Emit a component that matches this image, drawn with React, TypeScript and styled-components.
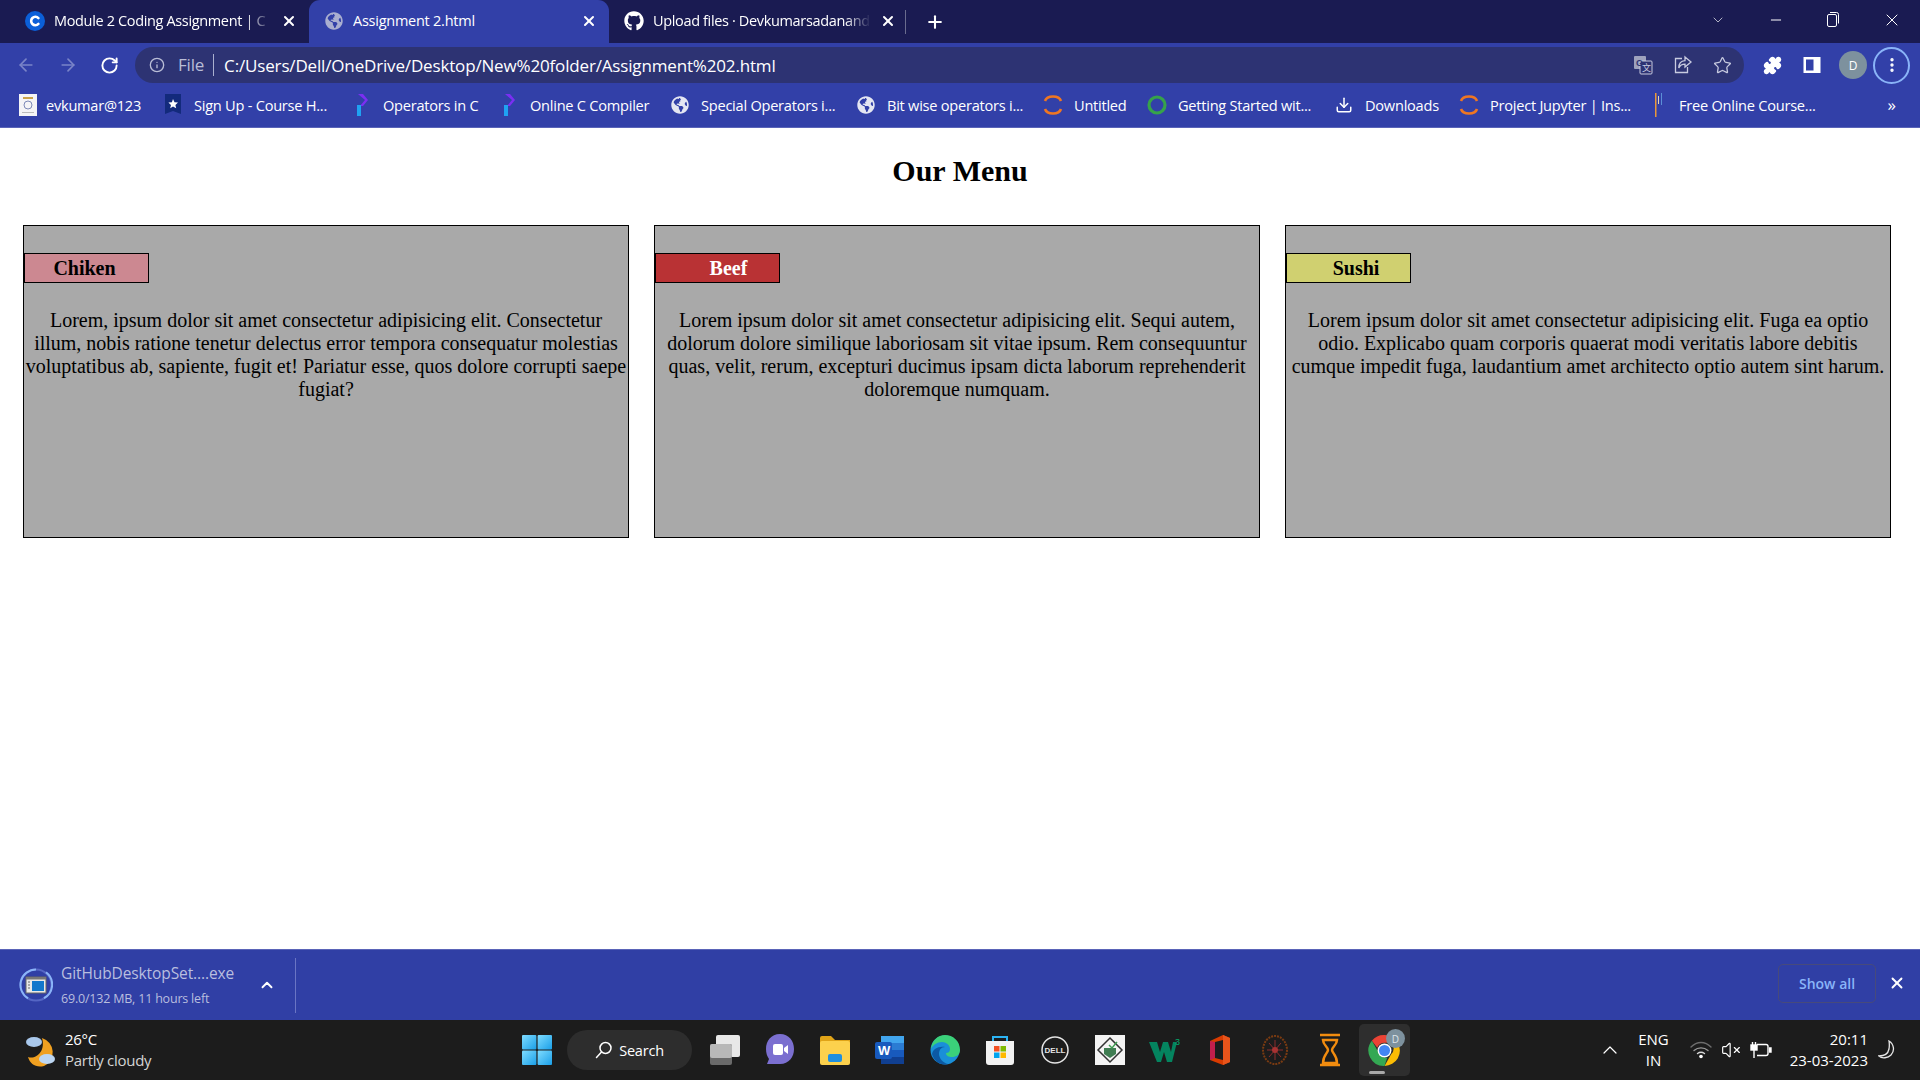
import React from 'react';
import styled, { createGlobalStyle } from 'styled-components';
import {
  ArrowLeft,
  ArrowRight,
  ChevronDown,
  ChevronUp,
  Download,
  Info,
  Minus,
  MoreVertical,
  Plus,
  Puzzle,
  RotateCw,
  Star,
  VolumeX,
  X,
} from 'lucide-react';
import { FaGithub, FaGlobeAmericas } from 'react-icons/fa';

const UI_FONT = '"Open Sans", "Noto Sans", sans-serif';

const GlobalStyle = createGlobalStyle`
  html, body {
    margin: 0;
    padding: 0;
    background: #fff;
    overflow: hidden;
  }
`;

const Screen = styled.div`
  width: 1920px;
  height: 1080px;
  display: flex;
  flex-direction: column;
  overflow: hidden;
  font-family: ${UI_FONT};
`;

/* tab strip */
const TabStrip = styled.div`
  height: 43px;
  flex: none;
  display: flex;
  align-items: stretch;
  background: #1a1b52;
  color: #fff;
`;

const Tab = styled.div<{ $active?: boolean; $width: number; $inset: number }>`
  width: ${(p) => p.$width}px;
  flex: none;
  display: flex;
  align-items: center;
  gap: 9px;
  box-sizing: border-box;
  padding: 0 12px 2px ${(p) => p.$inset}px;
  border-radius: 11px 11px 0 0;
  background: ${(p) => (p.$active ? '#3240a8' : 'transparent')};
`;

const TabTitle = styled.span<{ $fade?: boolean }>`
  flex: 1;
  min-width: 0;
  font-size: 14.5px;
  letter-spacing: ${(p) => (p.$fade ? -0.35 : -0.25)}px;
  white-space: nowrap;
  overflow: hidden;
  ${(p) => p.$fade && 'mask-image: linear-gradient(90deg, #000 88%, transparent 100%);'}
`;

const TabDivider = styled.div`
  width: 1px;
  height: 24px;
  align-self: center;
  background: #6a6c8e;
  margin-left: -3px;
`;

const NewTab = styled.div`
  display: flex;
  align-items: center;
  margin-left: 19px;
`;

const WindowControls = styled.div`
  margin-left: auto;
  display: flex;
  align-items: center;
  gap: 42px;
  padding: 0 18px 3px 0;
`;

const Favicon = styled.span`
  width: 20px;
  height: 20px;
  flex: none;
  display: flex;
  align-items: center;
  justify-content: center;
`;

/* toolbar */
const Toolbar = styled.div`
  height: 41px;
  flex: none;
  display: flex;
  align-items: center;
  background: #3240a8;
  box-sizing: border-box;
  padding: 3px 5px 0 16px;
`;

const NavButtons = styled.div`
  width: 119px;
  flex: none;
  display: flex;
  align-items: center;
  gap: 22px;
`;

const Omnibox = styled.div`
  width: 1609px;
  height: 36px;
  flex: none;
  display: flex;
  align-items: center;
  box-sizing: border-box;
  padding: 0 12px 0 14px;
  border-radius: 18px;
  background: #2d3373;
  color: #fff;
`;

const SchemeLabel = styled.span`
  margin-left: 13px;
  padding-right: 9px;
  border-right: 1px solid #aab0cf;
  color: #b9bdd6;
  font-size: 17px;
  line-height: 22px;
  letter-spacing: -0.2px;
`;

const UrlText = styled.span`
  margin-left: 10px;
  font-size: 17px;
  letter-spacing: -0.16px;
  white-space: nowrap;
`;

const OmniboxActions = styled.div`
  margin-left: auto;
  display: flex;
  align-items: center;
  gap: 20px;
  color: #c8cbe0;
`;

const ToolbarActions = styled.div`
  display: flex;
  align-items: center;
  gap: 21px;
  margin-left: 19px;
  color: #fff;
`;

const Avatar = styled.span`
  width: 28px;
  height: 28px;
  margin-left: -3px;
  display: flex;
  align-items: center;
  justify-content: center;
  border-radius: 50%;
  background: #7d919e;
  color: #fff;
  font-size: 12px;
`;

const MenuRing = styled.span`
  width: 37px;
  height: 37px;
  margin-left: -15px;
  box-sizing: border-box;
  display: flex;
  align-items: center;
  justify-content: center;
  border: 2px solid #8ab4f8;
  border-radius: 50%;
`;

/* bookmarks */
const BookmarkBar = styled.div`
  height: 44px;
  flex: none;
  display: flex;
  align-items: center;
  box-sizing: border-box;
  padding: 0 0 2px 18px;
  background: #3240a8;
  color: #fff;
  border-bottom: 1px solid #5a64b8;
`;

const Bookmark = styled.div<{ $width: number; $gap: number }>`
  width: ${(p) => p.$width}px;
  flex: none;
  display: flex;
  align-items: center;
  gap: ${(p) => p.$gap}px;
  font-size: 14.6px;
  letter-spacing: -0.25px;
  white-space: nowrap;
`;

const BookmarkOverflow = styled.span`
  margin-left: auto;
  padding-right: 24px;
  font-size: 17px;
`;

/* page */
const Page = styled.main`
  flex: 1;
  min-height: 0;
  background: #fff;
  font-family: 'Liberation Serif', 'Times New Roman', serif;
  color: #000;
`;

const Heading = styled.h1`
  margin: 0;
  padding-top: 26px;
  height: 97px;
  box-sizing: border-box;
  text-align: center;
  font-size: 30px;
  line-height: 34px;
  font-weight: 700;
`;

const MenuRow = styled.section`
  display: flex;
  gap: 25px;
  padding-left: 23px;
`;

const MenuCard = styled.article`
  width: 606px;
  height: 313px;
  box-sizing: border-box;
  border: 1px solid #000;
  background: #a9a9a9;
  padding-top: 27px;
`;

const DishLabel = styled.h3<{ $bg: string; $fg: string; $shift: number }>`
  margin: 0;
  width: 125px;
  height: 30px;
  box-sizing: border-box;
  border: 1px solid #000;
  background: ${(p) => p.$bg};
  color: ${(p) => p.$fg};
  font-size: 20px;
  line-height: 28px;
  font-weight: 700;
  text-align: center;
  padding-left: ${(p) => Math.max(p.$shift, 0)}px;
  padding-right: ${(p) => Math.max(-p.$shift, 0)}px;
`;

const DishText = styled.p`
  margin: 26px 0 0;
  text-align: center;
  font-size: 20px;
  line-height: 23px;
`;

/* download shelf */
const DownloadShelf = styled.div`
  height: 71px;
  flex: none;
  display: flex;
  align-items: center;
  box-sizing: border-box;
  background: #303fa5;
  border-top: 1px solid #5a64b8;
  padding: 0 14px 0 19px;
  color: #fff;
`;

const DownloadItem = styled.div`
  width: 277px;
  height: 55px;
  flex: none;
  display: flex;
  align-items: center;
  box-sizing: border-box;
  border-right: 1px solid #6a75c4;
`;

const DownloadInfo = styled.div`
  margin-left: 8px;
  width: 197px;
  display: flex;
  flex-direction: column;
  gap: 8px;
  color: #b9bedf;
`;

const FileName = styled.span`
  font-size: 15.5px;
  line-height: 20px;
  letter-spacing: -0.1px;
`;

const FileProgress = styled.span`
  font-size: 12.5px;
  line-height: 16px;
  letter-spacing: -0.2px;
`;

const ShowAll = styled.div`
  margin: 0 0 4px auto;
  width: 98px;
  height: 39px;
  box-sizing: border-box;
  display: flex;
  align-items: center;
  justify-content: center;
  border: 1px solid #474a7c;
  border-radius: 5px;
  color: #8ab4f8;
  font-size: 14px;
  font-weight: 600;
`;

const ShelfClose = styled.span`
  display: flex;
  margin: 0 0 4px 12px;
`;

/* taskbar */
const Taskbar = styled.footer`
  height: 60px;
  flex: none;
  display: grid;
  grid-template-columns: 522px 1fr auto;
  align-items: center;
  background: #1c1c1c;
  color: #fff;
`;

const Weather = styled.div`
  display: flex;
  align-items: center;
  gap: 7px;
  padding-left: 24px;
`;

const TrayLines = styled.div<{ $align: string; $spacing?: number }>`
  display: flex;
  flex-direction: column;
  align-items: ${(p) => p.$align};
  padding-bottom: 1px;
  font-size: 15px;
  line-height: 20.5px;
  letter-spacing: ${(p) => p.$spacing ?? -0.28}px;
`;

const MutedLine = styled.span`
  color: #d4d4d4;
`;

const TaskIcons = styled.div`
  display: flex;
  align-items: center;
`;

const SearchPill = styled.div`
  width: 125px;
  height: 40px;
  flex: none;
  margin: 0 5px 0 15px;
  display: flex;
  align-items: center;
  justify-content: center;
  gap: 6px;
  border-radius: 20px;
  background: #2d2d2d;
  font-size: 14.5px;
  letter-spacing: -0.2px;
`;

const TaskIcon = styled.span<{ $active?: boolean }>`
  position: relative;
  width: ${(p) => (p.$active ? 51 : 55)}px;
  height: 52px;
  margin-left: ${(p) => (p.$active ? 2 : 0)}px;
  flex: none;
  display: flex;
  align-items: center;
  justify-content: center;
  box-sizing: border-box;
  border-radius: 5px;
  background: ${(p) => (p.$active ? '#2e2e2e' : 'transparent')};
`;

const RunningBar = styled.span`
  position: absolute;
  bottom: 2px;
  left: 10px;
  width: 16px;
  height: 3px;
  border-radius: 2px;
  background: #a9a9a9;
`;

const ChromeBadge = styled.span`
  position: absolute;
  top: 5px;
  right: 5px;
  width: 19px;
  height: 19px;
  display: flex;
  align-items: center;
  justify-content: center;
  border-radius: 50%;
  background: #7d919e;
  color: #dfe4e8;
  font-size: 10px;
`;

const Tray = styled.div`
  display: flex;
  align-items: center;
  padding-right: 24px;
`;

const TrayIcon = styled.span<{ $gap: number }>`
  display: flex;
  margin-left: ${(p) => p.$gap}px;
`;

const TrayClock = styled.div`
  margin-left: 18px;
`;

/* drawn icons */
const WindowsLogo = () => (
  <svg width="30" height="30" viewBox="0 0 30 30">
    <defs>
      <linearGradient id="winGrad" x1="0" y1="0" x2="1" y2="1">
        <stop offset="0" stopColor="#7fdcff" />
        <stop offset="1" stopColor="#1a9fe8" />
      </linearGradient>
    </defs>
    <rect x="0" y="0" width="14.4" height="14.4" rx="1" fill="url(#winGrad)" />
    <rect x="15.6" y="0" width="14.4" height="14.4" rx="1" fill="url(#winGrad)" />
    <rect x="0" y="15.6" width="14.4" height="14.4" rx="1" fill="url(#winGrad)" />
    <rect x="15.6" y="15.6" width="14.4" height="14.4" rx="1" fill="url(#winGrad)" />
  </svg>
);

const ChromeLogo = ({ size = 37 }: { size?: number }) => (
  <svg width={size} height={size} viewBox="0 0 48 48">
    <path d="M24 4a20 20 0 0 1 17.3 10H24a10 10 0 0 0-9.3 6.3L7.6 11.5A20 20 0 0 1 24 4z" fill="#ea4335" />
    <path d="M41.3 14A20 20 0 0 1 24 44l8.6-15a10 10 0 0 0-.1-15z" fill="#fbbc04" />
    <path d="M24 44A20 20 0 0 1 7.6 11.5l8.7 15.1a10 10 0 0 0 11.2 6.8z" fill="#34a853" />
    <circle cx="24" cy="24" r="9" fill="#fff" />
    <circle cx="24" cy="24" r="7.2" fill="#4285f4" />
  </svg>
);

const CourseraC = () => (
  <svg width="20" height="20" viewBox="0 0 20 20">
    <circle cx="10" cy="10" r="10" fill="#0b5fd8" />
    <path d="M13.4 7.1a4.2 4.2 0 1 0 0 5.8" fill="none" stroke="#fff" strokeWidth="2.6" strokeLinecap="round" />
  </svg>
);

const RestoreIcon = () => (
  <svg width="14" height="18" viewBox="0 0 14 18" fill="none" stroke="#fff" strokeWidth="1">
    <rect x="1.5" y="3.5" width="9" height="12" rx="1.5" />
    <path d="M4 1.5h6.5a2 2 0 0 1 2 2v9" />
  </svg>
);

const TranslateIcon = () => (
  <svg width="20" height="20" viewBox="0 0 20 20">
    <rect x="1" y="1" width="12" height="13" rx="1" fill="#9ea2bd" />
    <rect x="7" y="6" width="12" height="13" rx="1" fill="#2d3373" stroke="#c8cbe0" />
    <text x="3" y="11" fontSize="9" fontWeight="700" fill="#2d3373" fontFamily="Liberation Sans, sans-serif">G</text>
    <text x="9" y="16" fontSize="9" fill="#c8cbe0" fontFamily="Noto Sans CJK SC, sans-serif">文</text>
  </svg>
);

const ShareIcon = () => (
  <svg width="20" height="20" viewBox="0 0 20 20" fill="none" stroke="#c8cbe0" strokeWidth="1.3">
    <path d="M9 3.5H2.5v14h12V12" />
    <path d="M12 2l6 5-6 5V9.2C9 9.2 7 10.5 5.8 13c0-4.5 2.6-7.2 6.2-7.4z" />
  </svg>
);

const SidePanelIcon = () => (
  <svg width="18" height="18" viewBox="0 0 18 18">
    <rect x="0.5" y="1" width="17" height="16" fill="#fff" />
    <rect x="3" y="3.5" width="7.5" height="11" fill="#3240a8" />
  </svg>
);

const ResumeIcon = () => (
  <svg width="18" height="22" viewBox="0 0 18 22">
    <rect x="0" y="0" width="18" height="22" fill="#f4f4f6" />
    <rect x="4" y="3" width="10" height="2" fill="#c9a24a" />
    <circle cx="9" cy="11" r="4" fill="none" stroke="#7d8ab8" />
    <rect x="3" y="18" width="12" height="1" fill="#bbb" />
  </svg>
);

const ShieldStar = () => (
  <svg width="20" height="22" viewBox="0 0 20 22">
    <path d="M2 0h16v20l-8-3-8 3z" fill="#132a7c" />
    <path d="M10 5l1.5 3.2 3.500.4-2.600 2.300.8 3.400L10 12.600l-2.800 1.700.8-3.400L5.400 8.600l3.500-.4z" fill="#fff" />
  </svg>
);

const ReplitArrow = () => (
  <svg width="14" height="22" viewBox="0 0 14 22">
    <path d="M3 0h5l5 6-5 6H5l5-6z" fill="#7b2ff2" />
    <path d="M2 11h4v11H2z" fill="#1fa2f3" />
  </svg>
);

const JupyterRing = () => (
  <svg width="20" height="22" viewBox="0 0 20 22" fill="none" stroke="#ef7622" strokeWidth="2.600">
    <path d="M2 7c2-6 14-6 16 0" />
    <path d="M2 15c2 6 14 6 16 0" />
  </svg>
);

const GreenRing = () => (
  <svg width="20" height="22" viewBox="0 0 20 22">
    <circle cx="10" cy="11" r="8" fill="none" stroke="#36a24a" strokeWidth="3.200" />
  </svg>
);

const FreeCourseMark = () => (
  <svg width="12" height="24" viewBox="0 0 12 24">
    <rect x="3" y="0" width="1.500" height="24" fill="#e9973a" />
    <rect x="6" y="3" width="1" height="8" fill="#e9d6b0" />
    <rect x="9" y="0" width="1" height="12" fill="#5b8fd6" />
  </svg>
);

const DownloadProgressIcon = () => (
  <svg width="34" height="34" viewBox="0 0 34 34">
    <circle cx="17" cy="17" r="15.500" fill="none" stroke="#5566c4" strokeWidth="2" />
    <path d="M17 1.500a15.500 15.500 0 0 0-8 28.800M25 30.200a15.500 15.500 0 0 0 2-26" fill="none" stroke="#8ab4f8" strokeWidth="2" />
    <rect x="7" y="9" width="20" height="16" fill="#e8e8e8" stroke="#666" strokeWidth="1" />
    <rect x="7" y="9" width="20" height="2.500" fill="#777" />
    <rect x="13" y="13" width="12" height="10" fill="#1177cc" />
    <path d="M9 14h2M9 17h2M9 20h2" stroke="#666" />
  </svg>
);

const WeatherIcon = () => (
  <svg width="34" height="40" viewBox="0 0 34 40">
    <path d="M18 8a15 15 0 0 1 2 28C12 38 6 34 4 27c8 3 18-6 14-19z" fill="#f0a020" />
    <ellipse cx="10" cy="12" rx="8" ry="5" fill="#a9c8ec" />
    <ellipse cx="23" cy="29" rx="8" ry="5" fill="#bcd6f2" />
  </svg>
);

const TaskViewIcon = () => (
  <svg width="32" height="32" viewBox="0 0 32 32">
    <rect x="7" y="1" width="24" height="22" rx="2" fill="#e8e8e8" />
    <rect x="1" y="10" width="22" height="21" rx="2" fill="#6a6a6a" />
    <rect x="1" y="10" width="22" height="14" rx="2" fill="#b8b8b8" />
  </svg>
);

const ChatIcon = () => (
  <svg width="30" height="34" viewBox="0 0 30 34">
    <path d="M15 1c9 0 14 7 14 15s-5 15-14 15H2l2-5C2 23 1 20 1 16 1 8 6 1 15 1z" fill="#7b6fd0" />
    <rect x="8" y="11" width="10" height="11" rx="2" fill="#fff" />
    <path d="M19 15l4-3v9l-4-3z" fill="#fff" />
  </svg>
);

const ExplorerIcon = () => (
  <svg width="32" height="30" viewBox="0 0 32 30">
    <path d="M1 3a2 2 0 0 1 2-2h9l4 4h15v6H1z" fill="#e0a418" />
    <rect x="1" y="6" width="30" height="24" rx="2" fill="#fcd14d" />
    <rect x="9" y="19" width="14" height="8" rx="2" fill="#1f8fe0" />
  </svg>
);

const WordIcon = () => (
  <svg width="30" height="30" viewBox="0 0 30 30">
    <rect x="6" y="1" width="23" height="28" rx="2" fill="#2b7cd3" />
    <rect x="6" y="1" width="23" height="7" fill="#41a5ee" />
    <rect x="6" y="15" width="23" height="7" fill="#185abd" />
    <rect x="6" y="22" width="23" height="7" fill="#103f91" />
    <rect x="0" y="7" width="17" height="17" rx="2" fill="#185abd" />
    <text x="3" y="20" fontSize="13" fontWeight="700" fill="#fff" fontFamily="Liberation Sans, sans-serif">W</text>
  </svg>
);

const EdgeIcon = () => (
  <svg width="30" height="32" viewBox="0 0 30 32">
    <circle cx="15" cy="16" r="14.500" fill="#1a8fd8" />
    <path d="M1 15C2 6 8 1 15 1c8 0 15 6 15 15 0 5-4 7-8 7-3 0-6-1-6-4 2 0 4-1 4-4 0-4-4-7-8-7-5 0-9 3-11 7z" fill="#3bd17a" />
    <path d="M15 13c-4 0-6 3-6 7s4 9 9 10c-6 2-14-2-16-10 1-5 6-8 13-7z" fill="#0c59a4" />
  </svg>
);

const StoreIcon = () => (
  <svg width="30" height="32" viewBox="0 0 30 32">
    <path d="M8 7V3h14v4" fill="none" stroke="#2bb3f3" strokeWidth="2" />
    <path d="M1 7h28v21a3 3 0 0 1-3 3H4a3 3 0 0 1-3-3z" fill="#f2f2f2" />
    <rect x="9" y="12" width="5.500" height="5.500" fill="#f25022" />
    <rect x="15.500" y="12" width="5.500" height="5.500" fill="#7fba00" />
    <rect x="9" y="18.500" width="5.500" height="5.500" fill="#00a4ef" />
    <rect x="15.500" y="18.500" width="5.500" height="5.500" fill="#ffb900" />
  </svg>
);

const DellIcon = () => (
  <svg width="28" height="28" viewBox="0 0 28 28">
    <circle cx="14" cy="14" r="13" fill="none" stroke="#e4e4e4" strokeWidth="1.500" />
    <text x="14" y="17" textAnchor="middle" fontSize="8" fontWeight="700" fill="#e4e4e4" fontFamily="Liberation Sans, sans-serif">DELL</text>
  </svg>
);

const VtuIcon = () => (
  <svg width="30" height="30" viewBox="0 0 30 30">
    <rect width="30" height="30" fill="#f4f4f4" />
    <path d="M15 3l12 12-12 12L3 15z" fill="none" stroke="#333" strokeWidth="1.500" />
    <path d="M9 13h12v6l-6 4-6-4z" fill="#3f7d52" />
    <path d="M14 10l3 3 5-6" fill="none" stroke="#3f9d52" strokeWidth="1.500" />
  </svg>
);

const W3Icon = () => (
  <svg width="32" height="26" viewBox="0 0 32 26">
    <path d="M0 5h8l3 10 3-10h5l3 10 2-10h4l-5 20h-5l-3-10-3 10H8z" fill="#04845f" />
    <text x="26" y="8" fontSize="9" fill="#04aa6d" fontFamily="Liberation Sans, sans-serif">3</text>
  </svg>
);

const OfficeIcon = () => (
  <svg width="22" height="32" viewBox="0 0 22 32">
    <path d="M1 7l13-6 7 3v24l-7 3-13-5z" fill="#d83b01" />
    <path d="M6 8l8-2v20l-8-2z" fill="#1c1c1c" />
    <path d="M1 7l5 1v16l-5 2z" fill="#c21f4c" />
    <path d="M14 1l7 3v24l-7 3z" fill="#e8541b" />
  </svg>
);

const WheelIcon = () => (
  <svg width="28" height="32" viewBox="0 0 28 32" fill="none">
    <ellipse cx="14" cy="16" rx="12" ry="14" stroke="#7a3b12" strokeWidth="2" strokeDasharray="2 1" />
    <path d="M14 6v20M6 16h16M8 9l12 14M20 9L8 23" stroke="#8a2c2c" strokeWidth="1" />
    <circle cx="14" cy="16" r="3" fill="#a83232" />
  </svg>
);

const HourglassIcon = () => (
  <svg width="24" height="34" viewBox="0 0 24 34" fill="none" stroke="#f28c0f" strokeWidth="2.500">
    <path d="M2 2h20M2 32h20" />
    <path d="M5 7h14c0 5-5 7-5 10s5 5 5 13H5c0-8 5-10 5-13S5 12 5 7z" />
  </svg>
);

const WifiIcon = () => (
  <svg width="22" height="18" viewBox="0 0 22 18" fill="none" strokeLinecap="round">
    <path d="M1 6c6-6 14-6 20 0" stroke="#6d6d6d" strokeWidth="1.400" />
    <path d="M4 9.500c4-3.500 10-3.500 14 0" stroke="#9a9a9a" strokeWidth="1.400" />
    <path d="M7.500 12.500c2-1.500 5-1.500 7 0" stroke="#d8d8d8" strokeWidth="1.400" />
    <circle cx="11" cy="15.500" r="1.800" fill="#fff" />
  </svg>
);

const BatteryPlugIcon = () => (
  <svg width="22" height="18" viewBox="0 0 22 18" fill="none" stroke="#fff" strokeWidth="1.400">
    <path d="M7 3.500h9a2 2 0 0 1 2 2v7a2 2 0 0 1-2 2H7" />
    <path d="M19 7h2v4h-2" fill="#fff" />
    <rect x="1" y="4" width="6" height="5" fill="#fff" />
    <path d="M2.500 1v3M5.500 1v3M4 9v8" />
  </svg>
);

const MoonIcon = () => (
  <svg width="18" height="20" viewBox="0 0 18 20" fill="none" stroke="#e8e8e8" strokeWidth="1.300">
    <path d="M11 1c5 3 6 10 2 14-3 3-9 4-12 1 5 0 9-2 10-7 .5-3 .5-5 0-8z" />
  </svg>
);

const SearchGlyph = () => (
  <svg width="18" height="18" viewBox="0 0 18 18" fill="none" stroke="#fff" strokeWidth="1.500">
    <circle cx="10.500" cy="7" r="5.500" />
    <path d="M6.500 11L1.500 16.500" strokeLinecap="round" />
  </svg>
);

const globe = <FaGlobeAmericas size={18} color="#e4e6f2" />;

const bookmarks: { label: string; icon: React.ReactNode; width: number; gap?: number }[] = [
  { label: 'evkumar@123', icon: <ResumeIcon />, width: 145, gap: 8 },
  { label: 'Sign Up - Course H...', icon: <ShieldStar />, width: 189 },
  { label: 'Operators in C', icon: <ReplitArrow />, width: 147 },
  { label: 'Online C Compiler', icon: <ReplitArrow />, width: 171 },
  { label: 'Special Operators i...', icon: globe, width: 186 },
  { label: 'Bit wise operators i...', icon: globe, width: 187 },
  { label: 'Untitled', icon: <JupyterRing />, width: 104 },
  { label: 'Getting Started wit...', icon: <GreenRing />, width: 187 },
  { label: 'Downloads', icon: <Download size={18} color="#fff" />, width: 125 },
  { label: 'Project Jupyter | Ins...', icon: <JupyterRing />, width: 189 },
  { label: 'Free Online Course...', icon: <FreeCourseMark />, width: 170 },
];

const dishes = [
  {
    name: 'Chiken',
    bg: '#cc8891',
    fg: '#000',
    shift: -4,
    text: 'Lorem, ipsum dolor sit amet consectetur adipisicing elit. Consectetur illum, nobis ratione tenetur delectus error tempora consequatur molestias voluptatibus ab, sapiente, fugit et! Pariatur esse, quos dolore corrupti saepe fugiat?',
  },
  {
    name: 'Beef',
    bg: '#b93234',
    fg: '#fff',
    shift: 22,
    text: 'Lorem ipsum dolor sit amet consectetur adipisicing elit. Sequi autem, dolorum dolore similique laboriosam sit vitae ipsum. Rem consequuntur quas, velit, rerum, excepturi ducimus ipsam dicta laborum reprehenderit doloremque numquam.',
  },
  {
    name: 'Sushi',
    bg: '#d0d070',
    fg: '#000',
    shift: 15,
    text: 'Lorem ipsum dolor sit amet consectetur adipisicing elit. Fuga ea optio odio. Explicabo quam corporis quaerat modi veritatis labore debitis cumque impedit fuga, laudantium amet architecto optio autem sint harum.',
  },
];

const taskIcons = [
  <TaskViewIcon />,
  <ChatIcon />,
  <ExplorerIcon />,
  <WordIcon />,
  <EdgeIcon />,
  <StoreIcon />,
  <DellIcon />,
  <VtuIcon />,
  <W3Icon />,
  <OfficeIcon />,
  <WheelIcon />,
  <HourglassIcon />,
];

export default function App() {
  return (
    <Screen>
      <GlobalStyle />
      <TabStrip>
        <Tab $width={309} $inset={25}>
          <Favicon><CourseraC /></Favicon>
          <TabTitle $fade>Module 2 Coding Assignment | C</TabTitle>
          <X size={16} strokeWidth={3} />
        </Tab>
        <Tab $active $width={300} $inset={15}>
          <Favicon><FaGlobeAmericas size={18} color="#a9aed0" /></Favicon>
          <TabTitle>Assignment 2.html</TabTitle>
          <X size={16} strokeWidth={3} />
        </Tab>
        <Tab $width={299} $inset={15}>
          <Favicon><FaGithub size={20} color="#fff" /></Favicon>
          <TabTitle $fade>Upload files · Devkumarsadanand</TabTitle>
          <X size={16} strokeWidth={3} />
        </Tab>
        <TabDivider />
        <NewTab><Plus size={20} strokeWidth={2.5} /></NewTab>
        <WindowControls>
          <ChevronDown size={16} strokeWidth={1} />
          <Minus size={16} strokeWidth={1.5} />
          <RestoreIcon />
          <X size={20} strokeWidth={1.2} />
        </WindowControls>
      </TabStrip>

      <Toolbar>
        <NavButtons>
          <ArrowLeft size={20} color="#7a84c8" />
          <ArrowRight size={20} color="#7a84c8" />
          <RotateCw size={19} color="#fff" strokeWidth={2.4} />
        </NavButtons>
        <Omnibox>
          <Info size={16} color="#b9bdd6" />
          <SchemeLabel>File</SchemeLabel>
          <UrlText>C:/Users/Dell/OneDrive/Desktop/New%20folder/Assignment%202.html</UrlText>
          <OmniboxActions>
            <TranslateIcon />
            <ShareIcon />
            <Star size={19} strokeWidth={1.6} />
          </OmniboxActions>
        </Omnibox>
        <ToolbarActions>
          <Puzzle size={19} fill="#fff" />
          <SidePanelIcon />
          <Avatar>D</Avatar>
          <MenuRing><MoreVertical size={18} color="#fff" strokeWidth={2.5} /></MenuRing>
        </ToolbarActions>
      </Toolbar>

      <BookmarkBar>
        {bookmarks.map((b) => (
          <Bookmark key={b.label} $width={b.width} $gap={b.gap ?? 11}>
            <Favicon>{b.icon}</Favicon>
            <span>{b.label}</span>
          </Bookmark>
        ))}
        <BookmarkOverflow>»</BookmarkOverflow>
      </BookmarkBar>

      <Page>
        <Heading>Our Menu</Heading>
        <MenuRow>
          {dishes.map((d) => (
            <MenuCard key={d.name}>
              <DishLabel $bg={d.bg} $fg={d.fg} $shift={d.shift}>{d.name}</DishLabel>
              <DishText>{d.text}</DishText>
            </MenuCard>
          ))}
        </MenuRow>
      </Page>

      <DownloadShelf>
        <DownloadItem>
          <DownloadProgressIcon />
          <DownloadInfo>
            <FileName>GitHubDesktopSet....exe</FileName>
            <FileProgress>69.0/132 MB, 11 hours left</FileProgress>
          </DownloadInfo>
          <ChevronUp size={18} strokeWidth={2.5} />
        </DownloadItem>
        <ShowAll>Show all</ShowAll>
        <ShelfClose><X size={18} strokeWidth={2.5} /></ShelfClose>
      </DownloadShelf>

      <Taskbar>
        <Weather>
          <WeatherIcon />
          <TrayLines $align="flex-start">
            <span>26°C</span>
            <MutedLine>Partly cloudy</MutedLine>
          </TrayLines>
        </Weather>
        <TaskIcons>
          <WindowsLogo />
          <SearchPill>
            <SearchGlyph />
            Search
          </SearchPill>
          {taskIcons.map((icon, i) => (
            <TaskIcon key={i}>{icon}</TaskIcon>
          ))}
          <TaskIcon $active>
            <ChromeLogo />
            <ChromeBadge>D</ChromeBadge>
            <RunningBar />
          </TaskIcon>
        </TaskIcons>
        <Tray>
          <ChevronUp size={24} strokeWidth={1.2} />
          <TrayIcon $gap={16}>
            <TrayLines $align="center" $spacing={0}>
              <span>ENG</span>
              <span>IN</span>
            </TrayLines>
          </TrayIcon>
          <TrayIcon $gap={21}><WifiIcon /></TrayIcon>
          <TrayIcon $gap={9}><VolumeX size={20} strokeWidth={1.4} /></TrayIcon>
          <TrayIcon $gap={9}><BatteryPlugIcon /></TrayIcon>
          <TrayClock>
            <TrayLines $align="flex-end" $spacing={0}>
              <span>20:11</span>
              <span>23-03-2023</span>
            </TrayLines>
          </TrayClock>
          <TrayIcon $gap={10}><MoonIcon /></TrayIcon>
        </Tray>
      </Taskbar>
    </Screen>
  );
}
